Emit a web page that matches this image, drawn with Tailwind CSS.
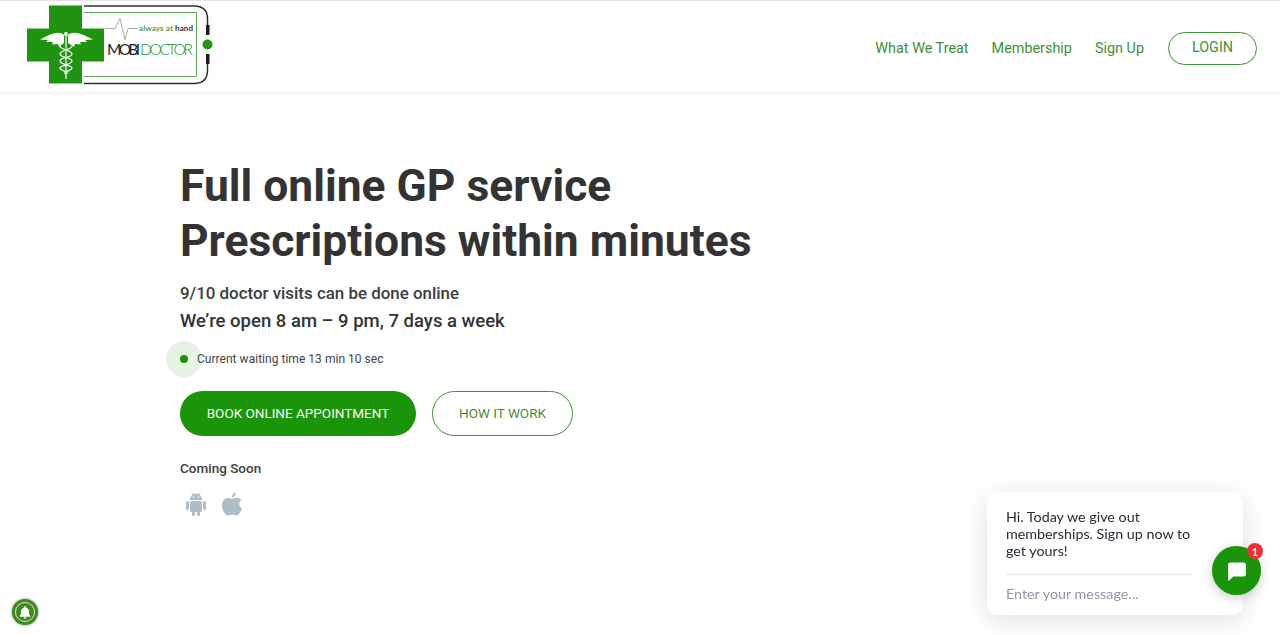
<!DOCTYPE html>
<html lang="en">
<head>
<meta charset="utf-8">
<title>MobiDoctor</title>
<script src="https://cdn.jsdelivr.net/npm/@tailwindcss/browser@4"></script>
</head>
<body class="h-[635px] overflow-hidden bg-white font-['Roboto',sans-serif] text-[#333]">

<!-- header -->
<header class="flex h-[92px] items-center justify-between border-t border-[#e4e4e4] pl-[26px] pr-[23px] shadow-[0_1px_4px_rgba(0,0,0,0.07)]">
  <a href="#" class="block h-[84px] w-[190px]">
    <svg width="190" height="84" viewBox="0 0 190 84" fill="none">
      <!-- phone outline -->
      <path d="M58 1H168Q181.500 1 181.500 14V21M181.500 58V65Q181.500 78.500 168 78.500H58" stroke="#2f2f33" stroke-width="1.500"/>
      <rect x="180" y="20" width="3.500" height="10" fill="#1c1c1c"/>
      <rect x="180" y="49" width="3.500" height="10" fill="#1c1c1c"/>
      <circle cx="181.500" cy="39.500" r="5" fill="#1f9a10"/>
      <path d="M58 7.500H170.500V71.500H58" stroke="#5da653" stroke-width="1"/>
      <path d="M79 23.500H89L94 13.500L99 34.500L102 23.500H112" stroke="#8a9a88" stroke-width="0.800"/>
      <!-- cross -->
      <path d="M23 0.500H56V23.500H78V56.500H56V78.500H23V56.500H1V23.500H23Z" fill="#1e9410"/>
      <!-- caduceus -->
      <path d="M38 30C33 25 24 29 14 34.500L22 35L20 37L27 37L26 39.500L32 39L33 42L38 38Z" fill="#fff"/>
      <path d="M42 30C47 25 57 29 67 34.500L59 35L61 37L54 37L55 39.500L49 39L48 42L42 38Z" fill="#fff"/>
      <path d="M40 27V74" stroke="#fff" stroke-width="1.200"/>
      <circle cx="40" cy="29" r="2" fill="#fff"/>
      <path d="M34 41C34 45 46 45 46 49C46 53 34 52 34 56C34 60 46 60 46 63C46 66 37 66 39 69M46 41C46 45 34 45 34 49C34 53 46 52 46 56C46 60 34 60 34 63C34 66 43 66 41 69" stroke="#fff" stroke-width="1.200"/>
      <text x="113" y="26" font-family="Lato" font-size="8" font-weight="700" textLength="54" fill="#5c9a4e">always at <tspan fill="#333">hand</tspan></text>
      <text x="81" y="49.500" font-family="Lato" font-size="15.500" textLength="33" fill="#1f1f1f">MOBI</text>
      <text x="114" y="49.500" font-family="Lato" font-size="15.500" font-weight="300" textLength="53" fill="#1e9410">DOCTOR</text>
    </svg>
  </a>
  <nav class="flex items-center pt-[3px] text-[14.400px] leading-none text-[#3f8f36]">
    <a href="#" class="mr-[23px] pt-[2px]">What We Treat</a>
    <a href="#" class="mr-[23px] pt-[2px]">Membership</a>
    <a href="#" class="mr-[24px] pt-[2px]">Sign Up</a>
    <a href="#" class="flex h-[33px] w-[89px] items-center justify-center rounded-full border border-[#3f8f36] pt-[1px]">LOGIN</a>
  </nav>
</header>

<!-- hero -->
<main class="pl-[180px] pt-[67px]">
  <h1 class="text-[44.400px] font-bold leading-[55px] text-[#333]">Full online GP service<br>Prescriptions within minutes</h1>
  <p class="mt-[11px] text-[16.900px] font-medium leading-[26px] text-[#3d3d3d]">9/10 doctor visits can be done online</p>
  <p class="mt-[2px] text-[18.500px] font-medium leading-[27px] text-[#333]">We’re open 8 am – 9 pm, 7 days a week</p>
  <div class="relative mt-[13px] flex h-[20px] items-center pl-[17px] text-[12px] tracking-[0.03px] text-[#444]">
    <span class="absolute left-[-14px] top-[-7px] flex h-[36px] w-[36px] items-center justify-center rounded-full bg-[#e6f4e4]">
      <span class="h-[8px] w-[8px] rounded-full bg-[#1a9408]"></span>
    </span>
    <span class="relative pt-[1px]">Current waiting time 13 min 10 sec</span>
  </div>
  <div class="mt-[23px] flex gap-[16px] text-[13.500px]">
    <a href="#" class="flex h-[45px] w-[236px] items-center justify-center rounded-full bg-[#1a9408] text-white">BOOK ONLINE APPOINTMENT</a>
    <a href="#" class="flex h-[45px] w-[141px] items-center justify-center rounded-full border border-[#3f8f36] text-[#3f8f36]">HOW IT WORK</a>
  </div>
  <p class="mt-[23px] text-[13.500px] font-medium leading-[18px] text-[#3d3d3d]">Coming Soon</p>
  <div class="mt-[15px] flex items-center gap-[14px] pl-[5px]">
    <svg width="22" height="24" viewBox="0 0 22 24" fill="#aebdc6">
      <path d="M5 8C5 4.500 7.500 1.500 11 1.500S17 4.500 17 8Z"/>
      <path d="M8 2.500 6.800 .5M14 2.500 15.200 .5" stroke="#aebdc6"/>
      <rect x="5" y="9" width="12" height="11" rx="1.500"/>
      <rect x="1" y="9" width="3" height="9" rx="1.500"/>
      <rect x="18" y="9" width="3" height="9" rx="1.500"/>
      <rect x="7" y="18" width="3" height="6" rx="1.500"/>
      <rect x="12" y="18" width="3" height="6" rx="1.500"/>
      <circle cx="8.500" cy="5" r=".8" fill="#fff"/>
      <circle cx="13.500" cy="5" r=".8" fill="#fff"/>
    </svg>
    <svg width="22" height="24" viewBox="0 0 22 24" fill="#aebdc6">
      <path d="M15 .5C15.200 3 13 5.500 10.800 5.500C10.500 3 13 .8 15 .5Z"/>
      <path d="M10.800 6.800C12 6.800 13.500 5.800 15.500 5.800C17.500 5.800 19.300 6.800 20.300 8.400C17.200 10.200 17.700 14.800 21 16.200C20 19 18 23.500 15.500 23.500C14 23.500 13 22.600 11.300 22.600C9.500 22.600 8.500 23.500 7 23.500C4.500 23.500 1 18.500 1 13.500C1 8.800 4 6 6.800 6C8.500 6 9.800 6.800 10.800 6.800Z"/>
    </svg>
  </div>
</main>

<!-- notification bell -->
<button class="fixed bottom-[10px] left-[12px] flex h-[26px] w-[26px] items-center justify-center rounded-full bg-[#3f8a1c] shadow-[0_0_3px_rgba(0,0,0,0.5)]">
  <span class="flex h-[20px] w-[20px] items-center justify-center rounded-full border border-white/80">
    <svg width="14" height="14" viewBox="0 0 24 24" fill="#fff">
      <path d="M12 2a2 2 0 0 0-2 2v.6C6.900 5.500 5 8.200 5 11.500V16l-2 2.500V20h18v-1.500L19 16v-4.500c0-3.300-1.900-6-5-6.900V4a2 2 0 0 0-2-2Z"/>
      <path d="M9.500 21a2.500 2.500 0 0 0 5 0Z"/>
    </svg>
  </span>
</button>

<!-- chat widget -->
<div class="fixed left-[987px] top-[492px] h-[123px] w-[256px] rounded-[11px] bg-white px-[19px] pt-[16px] font-['Lato',sans-serif] shadow-[0_5px_28px_rgba(0,0,0,0.13)]">
  <p class="w-[190px] text-[14.300px] leading-[17px] text-[#262b36]">Hi. Today we give out memberships. Sign up now to get yours!</p>
  <div class="mt-[15px] h-px w-[187px] bg-[#e8e9ec]"></div>
  <p class="mt-[10px] text-[14.300px] leading-[18px] text-[#8f96a5]">Enter your message...</p>
</div>
<button class="fixed left-[1212px] top-[546px] flex h-[49px] w-[49px] items-center justify-center rounded-full bg-[#1a9408] shadow-[0_3px_12px_rgba(0,0,0,0.2)]">
  <svg width="20" height="20" viewBox="0 0 20 20" fill="#fff">
    <path d="M3.500 1.500H16.500A2.500 2.500 0 0 1 19 4V13A2.500 2.500 0 0 1 16.500 15.500H6.500L2 19.500C1.500 19.800 1 19.500 1 19V4A2.500 2.500 0 0 1 3.500 1.500Z"/>
  </svg>
  <span class="absolute left-[35px] top-[-3px] flex h-[16px] w-[16px] items-center justify-center rounded-full bg-[#ee2f3a] font-['Lato',sans-serif] text-[11px] font-bold leading-none text-white">1</span>
</button>
</body>
</html>
